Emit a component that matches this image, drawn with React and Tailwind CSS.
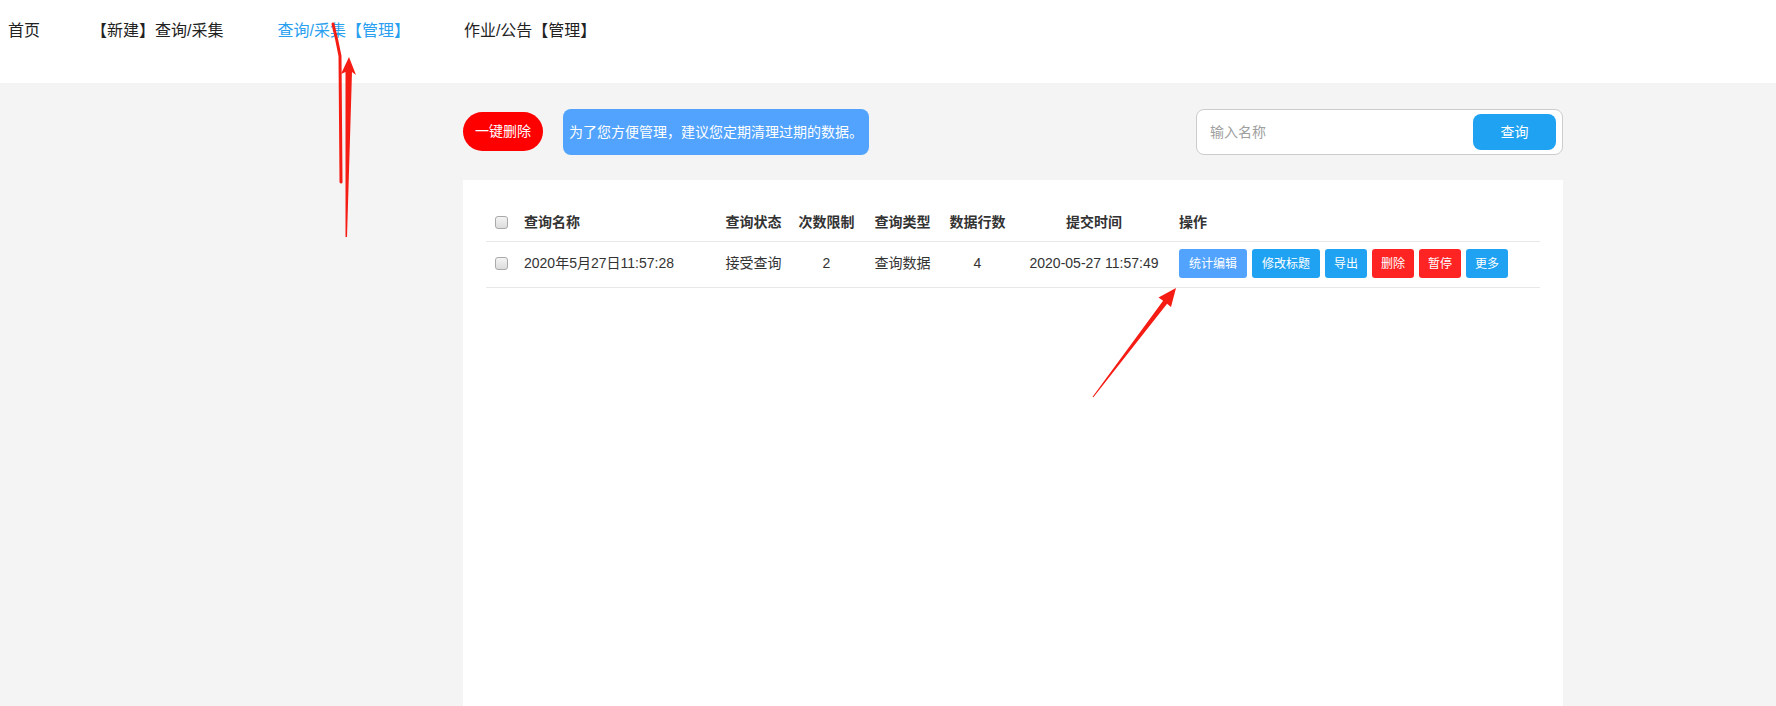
import React from "react";

const NAV = ["首页", "【新建】查询/采集", "查询/采集【管理】", "作业/公告【管理】"];

// column widths of the table, left to right
const COLS = [
  { key: "check", w: "w-[30px]" },
  { key: "name", w: "w-[202px]", label: "查询名称", align: "text-left pl-[8px]" },
  { key: "status", w: "w-[71px]", label: "查询状态", align: "text-center" },
  { key: "limit", w: "w-[75px]", label: "次数限制", align: "text-center" },
  { key: "type", w: "w-[77px]", label: "查询类型", align: "text-center" },
  { key: "rows", w: "w-[73px]", label: "数据行数", align: "text-center" },
  { key: "time", w: "w-[160px]", label: "提交时间", align: "text-center" },
  { key: "ops", w: "flex-1", label: "操作", align: "text-left pl-[5px]" },
];

const ROW = {
  name: "2020年5月27日11:57:28",
  status: "接受查询",
  limit: "2",
  type: "查询数据",
  rows: "4",
  time: "2020-05-27 11:57:49",
};

const ACTIONS = [
  { text: "统计编辑", cls: "bg-[#51a3fd] px-[10px]" },
  { text: "修改标题", cls: "bg-[#1fa2f1] px-[10px]" },
  { text: "导出", cls: "bg-[#1fa2f1] px-[9px]" },
  { text: "删除", cls: "bg-[#ff2424] px-[9px]" },
  { text: "暂停", cls: "bg-[#ff2424] px-[9px]" },
  { text: "更多", cls: "bg-[#1fa2f1] px-[9px]" },
];

const Checkbox = () => (
  <span className="block w-[13px] h-[13px] rounded-[3px] border border-[#a9a9a9] bg-[linear-gradient(#f4f4f4,#dcdcdc)]" />
);

export default function App() {
  return (
    <div
      className="relative h-[706px] overflow-hidden bg-[#f4f4f4] text-[#333] flex flex-col"
      style={{ fontFamily: '"Liberation Sans", "Noto Sans CJK SC", sans-serif' }}
    >
      {/* top nav */}
      <nav className="h-[83px] shrink-0 bg-white flex items-start gap-[51px] pl-[8px] pt-[20px] text-[16px] leading-[22px]">
        {NAV.map((n, i) => (
          <a key={n} className={`${i === 2 ? "text-[#2a9ff0]" : "text-[#222]"} ${i > 0 ? "pr-[3px]" : ""}`}>
            {n}
          </a>
        ))}
      </nav>

      <div className="ml-[463px] w-[1100px] flex-1 flex flex-col">
        {/* toolbar */}
        <div className="flex items-start pt-[26px]">
          <button className="mt-[3px] h-[39px] w-[80px] rounded-full bg-[#ff0000] text-white text-[14px]">
            一键删除
          </button>
          <div className="ml-[20px] h-[46px] w-[306px] rounded-[8px] bg-[#51a3fd] text-white text-[14px] flex items-center pl-[6px]">
            为了您方便管理，建议您定期清理过期的数据。
          </div>
          <div className="ml-auto h-[46px] w-[367px] rounded-[8px] border border-[#cccccc] bg-white flex items-center pl-[13px] pr-[6px]">
            <input
              placeholder="输入名称"
              className="flex-1 outline-none text-[14px] placeholder:text-[#a0a0a0]"
            />
            <button className="h-[36px] w-[83px] rounded-[8px] bg-[#1fa2f1] text-white text-[14px]">
              查询
            </button>
          </div>
        </div>

        {/* table panel */}
        <div className="mt-[25px] flex-1 bg-white px-[23px] pt-[24px]">
          <div className="flex h-[38px] items-center border-b border-[#e8e8e8] text-[14px] font-bold">
            {COLS.map((c) => (
              <div key={c.key} className={`${c.w} ${c.align || ""} flex-none ${c.key === "ops" ? "flex-1" : ""}`}>
                {c.key === "check" ? (
                  <div className="pl-[9px]">
                    <Checkbox />
                  </div>
                ) : (
                  c.label
                )}
              </div>
            ))}
          </div>
          <div className="flex h-[46px] items-center pb-[2px] border-b border-[#e8e8e8] text-[14px]">
            {COLS.map((c) => (
              <div key={c.key} className={`${c.w} ${c.align || ""} flex-none ${c.key === "ops" ? "flex-1" : ""}`}>
                {c.key === "check" ? (
                  <div className="pl-[9px]">
                    <Checkbox />
                  </div>
                ) : c.key === "ops" ? (
                  <div className="flex gap-[5px]">
                    {ACTIONS.map((a) => (
                      <button
                        key={a.text}
                        className={`${a.cls} h-[29px] rounded-[3px] text-[12px] text-white`}
                      >
                        {a.text}
                      </button>
                    ))}
                  </div>
                ) : (
                  ROW[c.key]
                )}
              </div>
            ))}
          </div>
        </div>
      </div>

      {/* red hand-drawn annotations */}
      <svg className="absolute left-0 top-0 pointer-events-none" width="1776" height="706">
        <path d="M333 24 Q 337 40 340 56 L 341 182" stroke="#f51c14" strokeWidth="3" fill="none" strokeLinecap="round" />
        <polygon fill="#f51c14" points="349,57 356,75 352,72 347,237 345.5,237 345.5,72 341,74" />
        <polygon
          fill="#f51c14"
          points="1176,288 1171,307 1167.1,303.8 1093.4,397.3 1092.6,396.7 1163.1,300.8 1158.5,297.5"
        />
      </svg>
    </div>
  );
}
